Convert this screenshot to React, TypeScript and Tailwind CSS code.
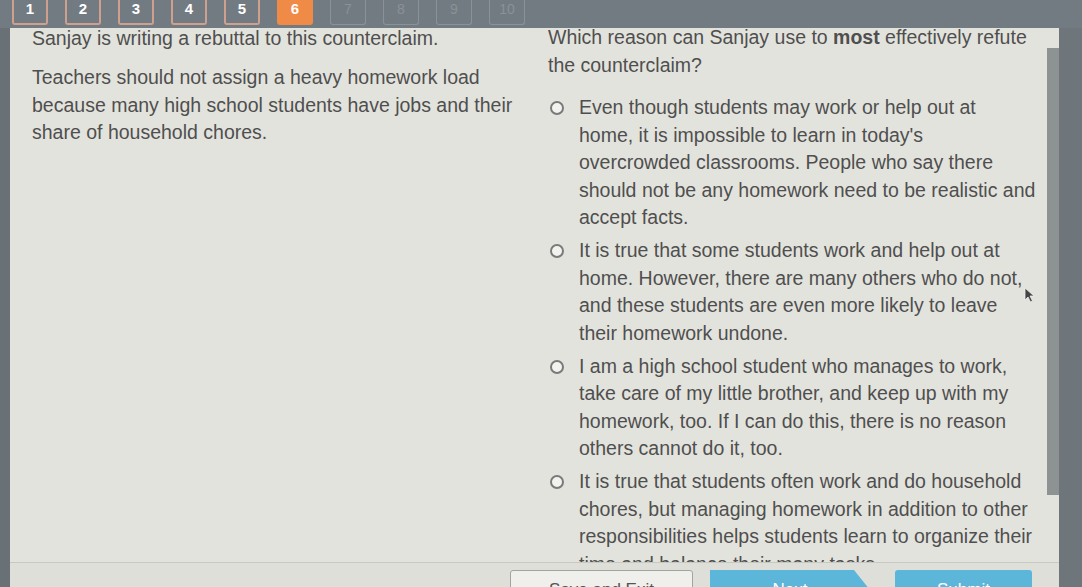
const questions = [1, 2, 3, 4, 5, 6, 7, 8, 9, 10];

const options: string[][] = [
  [
    "Even though students may work or help out at",
    "home, it is impossible to learn in today's",
    "overcrowded classrooms. People who say there",
    "should not be any homework need to be realistic and",
    "accept facts.",
  ],
  [
    "It is true that some students work and help out at",
    "home. However, there are many others who do not,",
    "and these students are even more likely to leave",
    "their homework undone.",
  ],
  [
    "I am a high school student who manages to work,",
    "take care of my little brother, and keep up with my",
    "homework, too. If I can do this, there is no reason",
    "others cannot do it, too.",
  ],
  [
    "It is true that students often work and do household",
    "chores, but managing homework in addition to other",
    "responsibilities helps students learn to organize their",
    "time and balance their many tasks.",
  ],
];

function Lines({ lines }: { lines: string[] }) {
  return (
    <>
      {lines.map((l, i) => (
        <div key={i} className="whitespace-nowrap">
          {l}
        </div>
      ))}
    </>
  );
}

export default function App() {
  return (
    <div
      className="w-[1082px] h-[587px] bg-[#6f777d] overflow-hidden flex flex-col relative"
      style={{ fontFamily: '"Liberation Sans", Arial, sans-serif' }}
    >
      {/* question numbers */}
      <div className="h-[28px] shrink-0 bg-[#737b82] flex items-start gap-[17px] pl-[12px]">
        {questions.map((n) => {
          const done = n < 6;
          const current = n === 6;
          return (
            <div
              key={n}
              className={
                current
                  ? "w-[36px] h-[25px] rounded-b-[3px] bg-[#ef8a47] text-white text-[15px] leading-[18px] font-bold flex justify-center"
                  : done
                  ? "w-[36px] h-[25px] rounded-b-[3px] border-2 border-t-0 border-[#cfa08e] text-white text-[15px] leading-[18px] font-bold flex justify-center"
                  : "w-[36px] h-[25px] rounded-b-[3px] border border-t-0 border-[#8a9197] text-[#8a9197] text-[14px] leading-[18px] flex justify-center"
              }
            >
              {n}
            </div>
          );
        })}
      </div>

      <div className="flex flex-1 min-h-0">
        <div className="w-[10px] shrink-0 bg-[#697177]" />

        {/* panel */}
        <div className="w-[1049px] shrink-0 bg-[#e3e3dd] flex flex-col">
          <div className="h-[534px] shrink-0 flex overflow-hidden text-[19.5px] leading-[27.5px] text-[#4f4f4f]">
            {/* passage */}
            <div className="w-[538px] shrink-0 pl-[22px] -mt-[3px]">
              <p>Sanjay is writing a rebuttal to this counterclaim.</p>
              <div className="mt-[11.5px]">
                <Lines
                  lines={[
                    "Teachers should not assign a heavy homework load",
                    "because many high school students have jobs and their",
                    "share of household chores.",
                  ]}
                />
              </div>
            </div>

            {/* question */}
            <div className="flex-1 -mt-[4px]">
              <div>
                <span>Which reason can Sanjay use to </span>
                <span className="font-bold">most</span>
                <span> effectively refute</span>
                <div>the counterclaim?</div>
              </div>
              <div className="mt-[15px] flex flex-col gap-[5.5px]">
                {options.map((opt, i) => (
                  <div key={i} className="flex">
                    <div className="w-[31px] shrink-0 pl-[2px] pt-[7px]">
                      <div className="w-[14px] h-[14px] rounded-full border-2 border-[#7a7a7a] bg-[#f2f2ee]" />
                    </div>
                    <div>
                      <Lines lines={opt} />
                    </div>
                  </div>
                ))}
              </div>
            </div>

            {/* scrollbar */}
            <div className="w-[12px] shrink-0 pt-[20px]">
              <div className="h-[447px] bg-[#8c9392]" />
            </div>
          </div>

          {/* footer */}
          <div className="flex-1 border-t border-[#c9c9c3] bg-[#dfdfd9] flex items-start pt-[7px] pl-[500px]">
            <button className="w-[183px] h-[40px] bg-[#efefeb] border border-[#a3a3a0] rounded-[3px] text-[#555] text-[17px]">
              Save and Exit
            </button>
            <button className="ml-[17px] w-[160px] h-[40px] bg-[#5bb6da] text-white text-[17px] [clip-path:polygon(0_0,90%_0,100%_50%,90%_100%,0_100%)]">
              Next
            </button>
            <button className="ml-[25px] w-[137px] h-[40px] bg-[#5bb6da] rounded-[3px] text-white text-[17px]">
              Submit
            </button>
          </div>
        </div>

        <div className="flex-1 bg-[#6e767c]" />
      </div>

      {/* mouse pointer */}
      <svg
        className="absolute left-[1024px] top-[287px]"
        width="12"
        height="16"
        viewBox="0 0 12 16"
      >
        <path d="M1 1 L1 13 L4 10 L6.5 15 L8.5 14 L6 9 L10 9 Z" fill="#444" stroke="#eee" strokeWidth="0.8" />
      </svg>
    </div>
  );
}
